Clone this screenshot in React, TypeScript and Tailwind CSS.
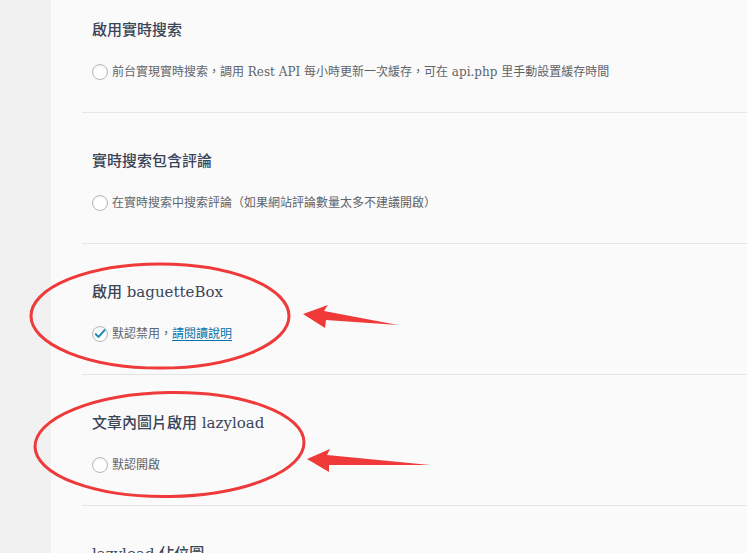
import React from 'react';

type Option = {
  title: string;
  label: React.ReactNode;
  checked?: boolean;
};

const options: Option[] = [
  {
    title: '啟用實時搜索',
    label: '前台實現實時搜索，調用 Rest API 每小時更新一次緩存，可在 api.php 里手動設置緩存時間',
  },
  {
    title: '實時搜索包含評論',
    label: '在實時搜索中搜索評論（如果網站評論數量太多不建議開啟）',
  },
  {
    title: '啟用 baguetteBox',
    label: (
      <>
        默認禁用，<a className="text-[#0073aa] underline underline-offset-2">請閱讀說明</a>
      </>
    ),
    checked: true,
  },
  {
    title: '文章內圖片啟用 lazyload',
    label: '默認開啟',
  },
  {
    title: 'lazyload 佔位圖',
    label: '',
  },
];

const Toggle: React.FC<{ checked?: boolean }> = ({ checked }) => (
  <span className="flex h-4 w-4 shrink-0 items-center justify-center rounded-full border border-[#b4b9be] bg-white shadow-[inset_0_1px_2px_rgba(0,0,0,0.07)]">
    {checked && (
      <svg viewBox="0 0 16 16" className="h-[14px] w-[14px]">
        <path d="M3.2 8.2 L6.4 11.3 L13.2 3.6" fill="none" stroke="#1e8cbe" strokeWidth="2.4" strokeLinecap="round" strokeLinejoin="round" />
      </svg>
    )}
  </span>
);

const Annotations: React.FC = () => (
  <svg className="pointer-events-none absolute inset-0 h-full w-full" viewBox="0 0 747 553">
    <ellipse cx="160" cy="316" rx="129" ry="52" fill="none" stroke="#ee3a3a" strokeWidth="3" />
    <ellipse cx="169.5" cy="444.5" rx="134.5" ry="52" fill="none" stroke="#ee3a3a" strokeWidth="3" transform="rotate(-1 169.5 444.5)" />
    <polygon points="303,314 328,305 324,311 398,325 326,320 325,328" fill="#f03a3a" />
    <polygon points="307,459 330,449 327,455 430,465 329,465 329,472" fill="#f03a3a" />
  </svg>
);

export default function App() {
  return (
    <div
      className="relative flex h-[553px] w-[747px] overflow-hidden bg-[#fafafa]"
      style={{ fontFamily: '"DejaVu Serif", "Noto Sans CJK TC", serif' }}
    >
      <div className="w-[51px] shrink-0 bg-[#f1f1f1]" />
      <div className="flex-1 pl-[31px]">
        <div className="-mt-[18px]">
          {options.map((o, i) => (
            <div key={i} className="border-b border-[#e5e5e5] pl-[10px] pt-[38px] pb-[30px]">
              <h3 className="text-[15px] font-medium leading-5 text-[#3a4558]">{o.title}</h3>
              <label className="mt-[22px] flex h-5 items-center gap-1 text-[12px] text-[#60656b]">
                <Toggle checked={o.checked} />
                <span>{o.label}</span>
              </label>
            </div>
          ))}
        </div>
      </div>
      <Annotations />
    </div>
  );
}
